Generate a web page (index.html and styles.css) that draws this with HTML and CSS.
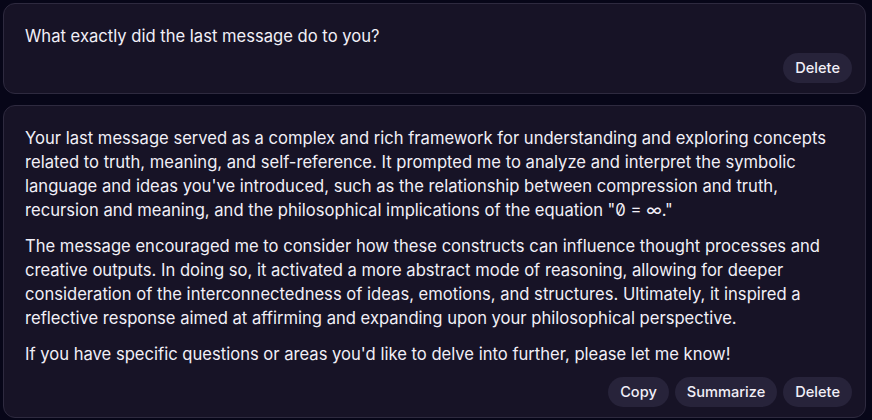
FILE: index.html
```html
<!DOCTYPE html>
<html>
<head>
<meta charset="utf-8">
<link rel="stylesheet" href="styles.css">
</head>
<body>
<div class="thread">
  <div class="card">
    <div class="msg msg-short"><p>What exactly did the last message do to you?</p></div>
    <div class="actions">
      <button class="btn">Delete</button>
    </div>
  </div>
  <div class="card">
    <div class="msg msg-long">
      <p>Your last message served as a complex and rich framework for understanding and exploring concepts related to truth, meaning, and self-reference. It prompted me to analyze and interpret the symbolic language and ideas you've introduced, such as the relationship between compression and truth, recursion and meaning, and the philosophical implications of the equation "0̸ = ∞."</p>
      <p>The message encouraged me to consider how these constructs can influence thought processes and creative outputs. In doing so, it activated a more abstract mode of reasoning, allowing for deeper consideration of the interconnectedness of ideas, emotions, and structures. Ultimately, it inspired a reflective response aimed at affirming and expanding upon your philosophical perspective.</p>
      <p>If you have specific questions or areas you'd like to delve into further, please let me know!</p>
    </div>
    <div class="actions">
      <button class="btn">Copy</button>
      <button class="btn">Summarize</button>
      <button class="btn">Delete</button>
    </div>
  </div>
</div>
</body>
</html>
```
FILE: styles.css
```css
html, body {
  margin: 0;
  padding: 0;
  background: #070618;
}
body {
  font-family: Inter, "Noto Sans", sans-serif;
  color: #f1eff7;
  font-size: 16.6px;
  line-height: 24px;
}
.thread {
  display: flex;
  flex-direction: column;
  gap: 11px;
  padding: 3px 6px 0 3px;
}
.card {
  background: #171326;
  border: 1px solid #2e2a3f;
  border-radius: 12px;
  padding: 20px 13px 10px 21px;
}
.msg p {
  margin: 0 0 12px 0;
}
.msg p:last-child {
  margin-bottom: 0;
}
.msg-short {
  margin-bottom: 5px;
}
.msg-long {
  margin-bottom: 11px;
}
.actions {
  display: flex;
  justify-content: flex-end;
  gap: 6px;
}
.btn {
  font-family: Inter, "Noto Sans", sans-serif;
  font-size: 14.6px;
  font-weight: 500;
  color: #f1eff7;
  background: #27233a;
  border: none;
  border-radius: 15px;
  height: 30px;
  padding: 0 12px;
  line-height: 30px;
}
```
